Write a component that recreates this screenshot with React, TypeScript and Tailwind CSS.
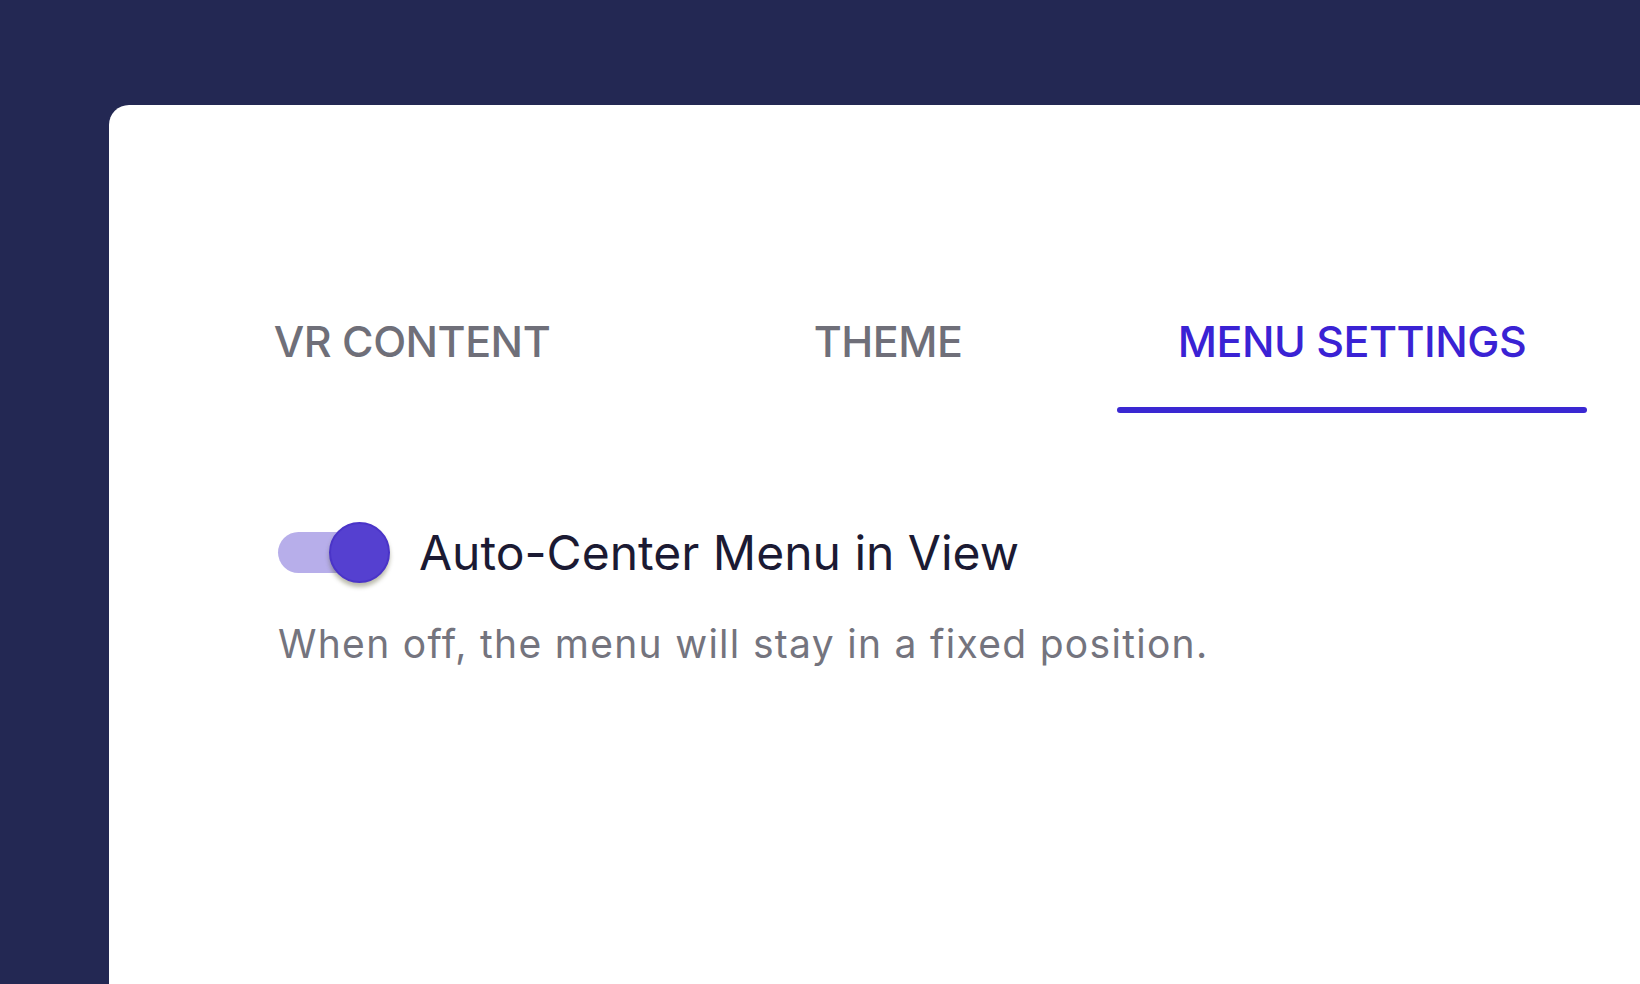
import { useState } from 'react';

const tabs = ['VR CONTENT', 'THEME', 'MENU SETTINGS'];

export default function App() {
  const [active, setActive] = useState(2);
  const [autoCenter, setAutoCenter] = useState(true);

  return (
    <div className="h-[984px] w-full overflow-hidden bg-[#232853] pl-[109px] pt-[105px]" style={{ fontFamily: "Inter, 'Noto Sans', sans-serif" }}>
      <div className="h-full w-full rounded-tl-[20px] bg-white pt-[210px]">
        <div className="ml-[68px] grid w-[1410px] grid-cols-3">
          {tabs.map((tab, i) => (
            <button
              key={tab}
              onClick={() => setActive(i)}
              className={`flex flex-col items-center ${i === 1 ? 'pl-[12px]' : ''}`}
            >
              <span
                className={`text-[43px] font-medium leading-[52px] tracking-[-0.5px] ${
                  active === i ? 'text-[#3a22d4]' : 'text-[#6f6f79]'
                }`}
              >
                {tab}
              </span>
              <span className={`mt-[40px] h-[6px] w-full rounded-full ${active === i ? 'bg-[#3a28d2]' : 'bg-transparent'}`} />
            </button>
          ))}
        </div>

        <div className="pl-[169px] pt-[109px]">
          <div className="flex items-center">
            <button
              onClick={() => setAutoCenter(!autoCenter)}
              className="relative h-[61px] w-[112px] shrink-0"
            >
              <span className={`absolute left-0 top-[10px] h-[41px] w-[104px] rounded-full ${autoCenter ? 'bg-[#b7aeea]' : 'bg-[#c8c8d0]'}`} />
              <span
                className={`absolute top-0 h-[61px] w-[61px] rounded-full border-2 shadow-[0_4px_4px_rgba(60,60,20,0.35)] ${
                  autoCenter ? 'left-[51px] border-[#4a34c8] bg-[#5540d0]' : 'left-0 border-[#dddddd] bg-white'
                }`}
              />
            </button>
            <span className="ml-[29px] text-[48px] leading-[60px] tracking-[0px] text-[#1b1a33]">Auto-Center Menu in View</span>
          </div>
          <p className="mt-[37px] text-[39px] leading-[48px] tracking-[1.3px] text-[#74747e]">
            When off, the menu will stay in a fixed position.
          </p>
        </div>
      </div>
    </div>
  );
}
